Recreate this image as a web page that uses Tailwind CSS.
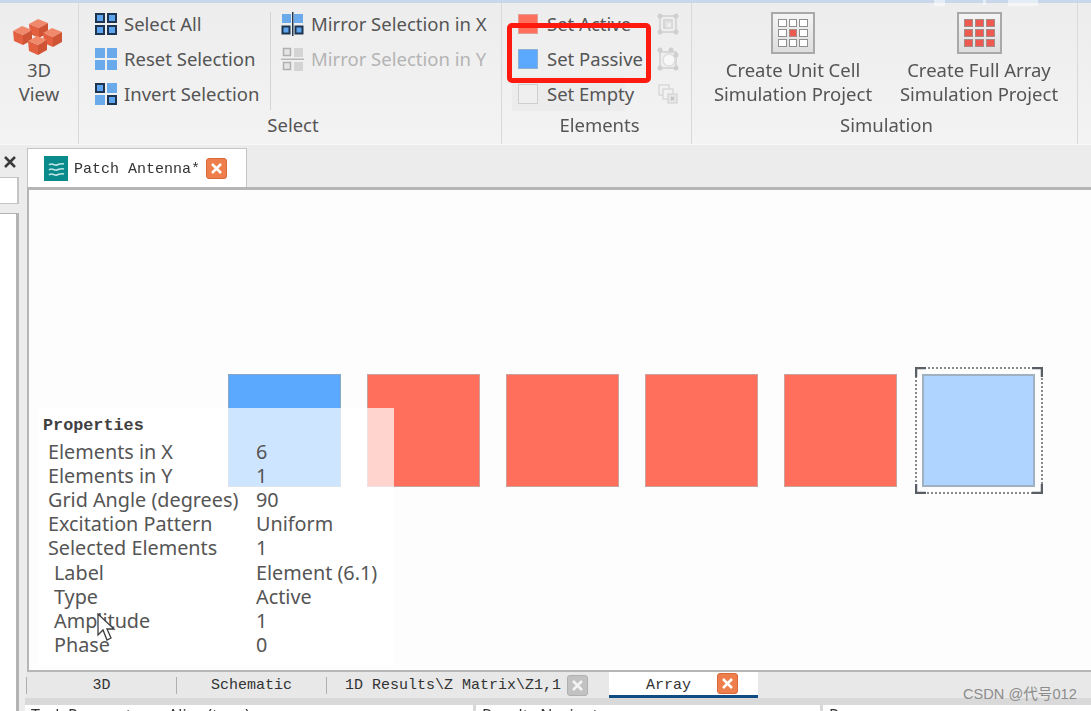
<!DOCTYPE html>
<html lang="en">
<head>
  <meta charset="UTF-8">
  <script src="https://cdn.jsdelivr.net/npm/@tailwindcss/browser@4"></script>
  <title>Patch Antenna</title>
</head>
<body class="bg-[#ececec]">
  <div class="relative w-[1091px] h-[711px] overflow-hidden flex flex-col blur-[0.4px] font-['Noto_Sans','Open_Sans',sans-serif] text-[18.500px] text-[#555]">

    <!-- ribbon -->
    <div class="flex h-[145px] shrink-0 border-t-[3px] border-[#c8d8ea] border-b border-b-[#f8f8f8] bg-gradient-to-b from-[#ededed] to-[#f3f3f3]">

      <div class="w-[79px] border-r border-[#d9d9d9] flex flex-col items-center leading-[24px]">
        <svg class="mt-[13px] ml-[-2px]" width="52" height="40" viewBox="0 0 52 40">
          <defs>
            <g id="cube">
              <polygon points="0,5 9,0 19,4 10,9" fill="#f0896c"/>
              <polygon points="0,5 10,9 10,19 1,15" fill="#e2603f"/>
              <polygon points="10,9 19,4 19,14 10,19" fill="#cf5335"/>
            </g>
          </defs>
          <use href="#cube" x="17" y="3"/>
          <use href="#cube" x="1" y="10"/>
          <use href="#cube" x="31" y="12"/>
          <use href="#cube" x="16" y="20"/>
        </svg>
        <div class="mt-[2px]">3D</div>
        <div>View</div>
      </div>

      <div class="w-[423px] border-r border-[#d9d9d9] flex flex-col pt-[3px] pb-[7px]">
        <div class="h-[108px] flex">
          <div class="w-[191px] pl-[16px] flex flex-col">
            <div class="h-[35px] flex items-center gap-[7px]">
              <svg width="22" height="22" viewBox="0 0 22 22" fill="#5ea5ee" stroke="#1d3550" stroke-width="2"><rect x="1" y="1" width="8" height="8"/><rect x="13" y="1" width="8" height="8"/><rect x="1" y="13" width="8" height="8"/><rect x="13" y="13" width="8" height="8"/></svg>
              <span>Select All</span>
            </div>
            <div class="h-[35px] flex items-center gap-[7px]">
              <svg width="22" height="22" viewBox="0 0 22 22" fill="#6aa9ea"><rect width="10" height="10"/><rect x="12" width="10" height="10"/><rect y="12" width="10" height="10"/><rect x="12" y="12" width="10" height="10"/></svg>
              <span>Reset Selection</span>
            </div>
            <div class="h-[35px] flex items-center gap-[7px]">
              <svg width="22" height="22" viewBox="0 0 22 22"><rect x="1" y="1" width="8" height="8" fill="#5ea5ee" stroke="#1d3550" stroke-width="2"/><rect x="12" width="10" height="10" fill="#6aa9ea"/><rect y="12" width="10" height="10" fill="#6aa9ea"/><rect x="13" y="13" width="8" height="8" fill="#5ea5ee" stroke="#1d3550" stroke-width="2"/></svg>
              <span>Invert Selection</span>
            </div>
          </div>
          <div class="w-px mt-[6px] mb-[3px] bg-[#d4d4d4]"></div>
          <div class="pl-[10px] flex flex-col">
            <div class="h-[35px] flex items-center gap-[7px]">
              <svg width="23" height="24" viewBox="0 0 23 24"><rect x="1" y="2" width="9" height="9" fill="#6aa9ea"/><rect x="13" y="2" width="9" height="9" fill="#6aa9ea"/><rect x="1.500" y="14.500" width="7" height="7" fill="#5ea5ee" stroke="#1d3550" stroke-width="2"/><rect x="14.500" y="14.500" width="7" height="7" fill="#5ea5ee" stroke="#1d3550" stroke-width="2"/><rect x="11" width="1.500" height="24" fill="#1d3550"/></svg>
              <span>Mirror Selection in X</span>
            </div>
            <div class="h-[35px] flex items-center gap-[7px] text-[#b4b4b4]">
              <svg width="23" height="24" viewBox="0 0 23 24"><rect x="2.500" y="1.500" width="7" height="7" fill="#e4e4e4" stroke="#b0b0b0" stroke-width="1.500"/><rect x="13" y="1" width="9" height="9" fill="#d4d4d4"/><rect x="2.500" y="15.500" width="7" height="7" fill="#e4e4e4" stroke="#b0b0b0" stroke-width="1.500"/><rect x="13" y="15" width="9" height="9" fill="#d4d4d4"/><rect y="11.500" width="23" height="1.500" fill="#b8b8b8"/></svg>
              <span>Mirror Selection in Y</span>
            </div>
          </div>
        </div>
        <div class="h-[24px] leading-[24px] text-center pl-[6px]">Select</div>
      </div>

      <div class="w-[190px] border-r border-[#d9d9d9] flex flex-col pt-[3px] pb-[7px]">
        <div class="h-[108px] flex">
          <div class="w-[155px] pl-[10px] flex flex-col">
            <div class="h-[35px] flex items-center gap-[9px] pl-[6px]">
              <div class="w-[20px] h-[20px] bg-[#ff6f5c] border border-[#e0a096]"></div>
              <span>Set Active</span>
            </div>
            <div class="h-[35px] flex items-center gap-[9px] pl-[6px]">
              <div class="w-[20px] h-[20px] bg-[#5aa9ff] border border-[#8fb0d0]"></div>
              <span>Set Passive</span>
            </div>
            <div class="h-[35px] flex items-center gap-[9px] pl-[6px] bg-[#ececec] w-[113px] whitespace-nowrap">
              <div class="w-[20px] h-[20px] shrink-0 bg-[#efefef] border border-[#cfcfcf]"></div>
              <span>Set Empty</span>
            </div>
          </div>
          <div class="flex flex-col">
            <div class="h-[35px] flex items-center">
              <svg width="22" height="22" viewBox="0 0 22 22" fill="none" stroke="#cfcfcf" stroke-width="1.500"><rect x="3" y="3" width="16" height="16"/><rect x="7" y="7" width="8" height="8"/><rect x="9" y="9" width="6" height="6" stroke="#dcdcdc"/><g fill="#cfcfcf" stroke="none"><circle cx="3" cy="3" r="2.500"/><circle cx="19" cy="3" r="2.500"/><circle cx="3" cy="19" r="2.500"/><circle cx="19" cy="19" r="2.500"/></g></svg>
            </div>
            <div class="h-[35px] flex items-center">
              <svg width="22" height="24" viewBox="0 0 22 24" fill="none" stroke="#cfcfcf" stroke-width="1.500"><rect x="3" y="5" width="16" height="16"/><circle cx="12" cy="13" r="6" fill="#f7f7f7" stroke="#dedede"/><g fill="#cfcfcf" stroke="none"><circle cx="3" cy="3" r="2.500"/><circle cx="14" cy="3" r="2.500"/><circle cx="3" cy="21" r="2.500"/><circle cx="19" cy="21" r="2.500"/><circle cx="19" cy="8" r="2.500"/></g></svg>
            </div>
            <div class="h-[35px] flex items-center">
              <svg width="22" height="22" viewBox="0 0 22 22" fill="#f1f1f1" stroke="#d6d6d6" stroke-width="1.300"><rect x="2" y="2" width="10" height="10"/><rect x="6" y="6" width="10" height="10"/><rect x="11" y="11" width="9" height="9" fill="#e6e6e6"/><path d="M14 14l3 3M17 14l-3 3" stroke="#bdbdbd"/></svg>
            </div>
          </div>
        </div>
        <div class="h-[24px] leading-[24px] text-center pl-[6px]">Elements</div>
      </div>

      <div class="w-[386px] border-r border-[#d9d9d9] flex flex-col pb-[7px]">
        <div class="h-[111px] flex pl-[8px] leading-[24px]">
          <div class="w-[186px] flex flex-col items-center pt-[9px]">
            <div class="w-[44px] h-[42px] border-2 border-[#a9a9a9] bg-gradient-to-b from-[#f4f4f4] to-[#dedede] grid grid-cols-3 gap-[2px] p-[5px]">
              <div class="border border-[#8f8f8f] bg-white"></div><div class="border border-[#8f8f8f] bg-white"></div><div class="border border-[#8f8f8f] bg-white"></div>
              <div class="border border-[#8f8f8f] bg-white"></div><div class="border border-[#a98f8c] bg-[#ee5a50]"></div><div class="border border-[#8f8f8f] bg-white"></div>
              <div class="border border-[#8f8f8f] bg-white"></div><div class="border border-[#8f8f8f] bg-white"></div><div class="border border-[#8f8f8f] bg-white"></div>
            </div>
            <div class="mt-[4px]">Create Unit Cell</div>
            <div>Simulation Project</div>
          </div>
          <div class="w-[186px] flex flex-col items-center pt-[9px]">
            <div class="w-[45px] h-[42px] border-2 border-[#a9a9a9] bg-gradient-to-b from-[#f4f4f4] to-[#dedede] grid grid-cols-3 gap-[2px] p-[5px]">
              <div class="border border-[#a58b88] bg-[#ee5a50]"></div><div class="border border-[#a58b88] bg-[#ee5a50]"></div><div class="border border-[#a58b88] bg-[#ee5a50]"></div>
              <div class="border border-[#a58b88] bg-[#ee5a50]"></div><div class="border border-[#a58b88] bg-[#ee5a50]"></div><div class="border border-[#a58b88] bg-[#ee5a50]"></div>
              <div class="border border-[#a58b88] bg-[#ee5a50]"></div><div class="border border-[#a58b88] bg-[#ee5a50]"></div><div class="border border-[#a58b88] bg-[#ee5a50]"></div>
            </div>
            <div class="mt-[4px]">Create Full Array</div>
            <div>Simulation Project</div>
          </div>
        </div>
        <div class="h-[24px] leading-[24px] text-center pl-[4px]">Simulation</div>
      </div>
    </div>

    <!-- bits of the window above, showing through the top edge -->
    <div class="absolute left-[934px] top-0 w-[11px] h-[6px] bg-white/50"></div>
    <div class="absolute left-[983px] top-0 w-[3px] h-[5px] bg-white/50"></div>
    <div class="absolute left-[1008px] top-0 w-[30px] h-[6px] bg-white/50"></div>

    <!-- red highlight over Set Active / Set Passive -->
    <div class="absolute left-[507px] top-[23px] w-[144px] h-[60px] border-[5px] border-[#ff1a10] rounded-[5px]"></div>

    <!-- body -->
    <div class="flex flex-1 min-h-0">
      <div class="w-[19px] shrink-0 flex flex-col">
        <div class="h-[32px] flex items-center justify-center pl-[1px] pt-[1px]">
          <svg width="12" height="12" viewBox="0 0 12 12" stroke="#3a3a3a" stroke-width="2.500"><path d="M1 1l10 10M11 1L1 11"/></svg>
        </div>
        <div class="h-[27px] bg-white border-r-2 border-y border-[#c4c4c4]"></div>
        <div class="h-[9px]"></div>
        <div class="flex-1 bg-white border-r-[3px] border-t border-[#b4b4b4]"></div>
      </div>

      <div class="flex-1 min-w-0 flex flex-col font-['Liberation_Mono',monospace] text-[15px] text-[#333]">
        <!-- document tab -->
        <div class="h-[42px] shrink-0 pl-[8px] pt-[3px] flex">
          <div class="w-[220px] h-[39px] bg-white border border-b-0 border-[#c4c4c4] flex items-center pl-[16px]">
            <svg width="24" height="25" viewBox="0 0 24 25"><rect width="24" height="25" fill="#0b8a8c"/><path d="M5 9c3-3 5 1 8 0s4-2 7-1M5 14c3-3 5 1 8 0s4-2 7-1M5 19c3-3 5 1 8 0s4-2 7-1" fill="none" stroke="#bfe6e4" stroke-width="1.600"/></svg>
            <span class="ml-[6px] w-[132px] pt-[4px]">Patch Antenna*</span>
            <div class="w-[21px] h-[21px] rounded-[3px] bg-[#ee7f4c] border border-[#d9683a] flex items-center justify-center">
              <svg width="11" height="11" viewBox="0 0 11 11" stroke="#fff" stroke-width="2.500"><path d="M1 1l9 9M10 1l-9 9"/></svg>
            </div>
          </div>
        </div>

        <!-- array canvas -->
        <div class="relative flex-1 min-h-0 ml-[8px] bg-[#fdfdfd] border-l-2 border-t-[3px] border-b-2 border-[#b6b6b6] pt-[184px] pl-[199px] flex gap-[26px] items-start font-['Noto_Sans',sans-serif] text-[19.800px] text-[#555]">
          <div class="w-[113px] h-[113px] shrink-0 bg-[#5aa9ff] border border-[#8ba6c2]"></div>
          <div class="w-[113px] h-[113px] shrink-0 bg-[#ff6f5c] border border-[#c9a29c]"></div>
          <div class="w-[113px] h-[113px] shrink-0 bg-[#ff6f5c] border border-[#c9a29c]"></div>
          <div class="w-[113px] h-[113px] shrink-0 bg-[#ff6f5c] border border-[#c9a29c]"></div>
          <div class="w-[113px] h-[113px] shrink-0 bg-[#ff6f5c] border border-[#c9a29c]"></div>
          <div class="relative w-[113px] h-[113px] shrink-0 -ml-[1px] bg-[#aed4ff] border-2 border-[#9fb0c0]">
            <svg class="absolute left-[-9px] top-[-9px]" width="128" height="127" viewBox="0 0 128 127" fill="none">
              <rect x="1" y="1" width="126" height="125" stroke="#8a8a8a" stroke-width="2" stroke-dasharray="2 2"/>
              <path d="M1 10V1h10M117 1h10v9M1 117v9h10M117 126h10v-9" stroke="#5a5f66" stroke-width="2.500"/>
            </svg>
          </div>

          <!-- properties overlay -->
          <div class="absolute left-[9px] top-[218px] w-[356px] h-[257px] bg-white/70 leading-[24px]">
            <div class="h-[32px] pl-[5px] pt-[3px] flex items-center font-['Liberation_Mono',monospace] font-bold text-[#3f3f3f] text-[16.800px]">Properties</div>
            <div class="grid grid-cols-[208px_1fr] auto-rows-[24.120px] pl-[10px]">
              <div>Elements in X</div><div>6</div>
              <div>Elements in Y</div><div>1</div>
              <div>Grid Angle (degrees)</div><div>90</div>
              <div>Excitation Pattern</div><div>Uniform</div>
              <div>Selected Elements</div><div>1</div>
              <div class="pl-[6px]">Label</div><div>Element (6.1)</div>
              <div class="pl-[6px]">Type</div><div>Active</div>
              <div class="pl-[6px]">Amplitude</div><div>1</div>
              <div class="pl-[6px]">Phase</div><div>0</div>
            </div>
          </div>

          <!-- mouse pointer -->
          <svg class="absolute left-[68px] top-[423px]" width="20" height="30" viewBox="0 0 20 30">
            <path d="M1 1v21l5-5 4 10 4-2-4-9h7z" fill="#fff" stroke="#3c3c3c" stroke-width="1.300"/>
          </svg>
        </div>

        <!-- view tabs -->
        <div class="h-[26px] shrink-0 ml-[7px] bg-[#e8e8e8] flex items-center">
          <div class="w-[150px] h-[17px] border-l border-[#b0b0b0] text-center leading-[17px]">3D</div>
          <div class="w-[150px] h-[17px] border-l border-[#b0b0b0] text-center leading-[17px]">Schematic</div>
          <div class="w-[241px] h-[17px] border-l border-[#b0b0b0] pl-[18px] leading-[17px] whitespace-nowrap">1D Results\Z Matrix\Z1,1</div>
          <div class="w-[21px] h-[21px] rounded-[3px] bg-[#c2c2c2] border border-[#b0b0b0] flex items-center justify-center shrink-0">
            <svg width="11" height="11" viewBox="0 0 11 11" stroke="#f4f4f4" stroke-width="2.500"><path d="M1 1l9 9M10 1l-9 9"/></svg>
          </div>
          <div class="ml-[21px] w-[149px] h-[26px] bg-white border-b-[3px] border-[#0f4c81] flex items-center pl-[37px] shrink-0">
            <span class="w-[71px] pt-[5px]">Array</span>
            <div class="w-[21px] h-[21px] rounded-[3px] bg-[#ee7f4c] border border-[#d9683a] flex items-center justify-center">
              <svg width="11" height="11" viewBox="0 0 11 11" stroke="#fff" stroke-width="2.500"><path d="M1 1l9 9M10 1l-9 9"/></svg>
            </div>
          </div>
        </div>

        <div class="h-[7px] shrink-0 ml-[6px] bg-[#d9d9d9]"></div>

        <!-- lower panes, only their top edge is in frame -->
        <div class="h-[6px] shrink-0 ml-[6px] flex gap-[3px] overflow-hidden font-['Noto_Sans',sans-serif] text-[16px] leading-[20px] text-[#333] bg-[#d9d9d9]">
          <div class="w-[448px] bg-white pl-[6px] whitespace-nowrap">Task Parameter &nbsp; &nbsp; Alias (type)</div>
          <div class="w-[344px] bg-white pl-[6px] whitespace-nowrap">Results Navigator</div>
          <div class="flex-1 bg-white pl-[6px]">P</div>
        </div>
      </div>
    </div>

    <!-- watermark -->
    <div class="absolute left-[963px] top-[684px] text-[14.600px] leading-[20px] text-[#8c8c8c] font-['Liberation_Sans','Noto_Sans_CJK_SC',sans-serif] whitespace-nowrap">CSDN @代号012</div>
  </div>
</body>
</html>
